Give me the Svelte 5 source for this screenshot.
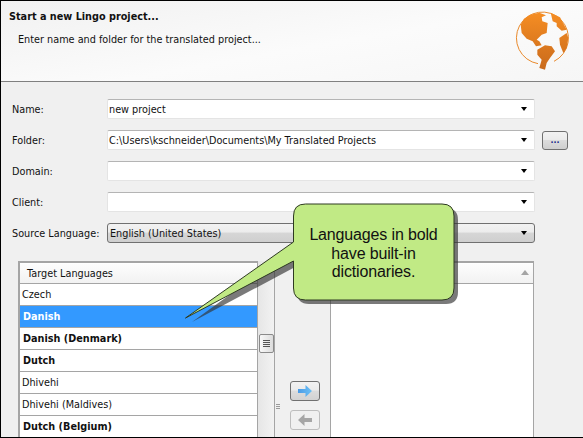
<script>
  const fields = [
    { label: 'Name:', value: 'new project' },
    { label: 'Folder:', value: 'C:\\Users\\kschneider\\Documents\\My Translated Projects', browse: true },
    { label: 'Domain:', value: '' },
    { label: 'Client:', value: '' },
    { label: 'Source Language:', value: 'English (United States)', grey: true }
  ];
  const langs = [
    { name: 'Czech' },
    { name: 'Danish', bold: true, selected: true },
    { name: 'Danish (Denmark)', bold: true },
    { name: 'Dutch', bold: true },
    { name: 'Dhivehi' },
    { name: 'Dhivehi (Maldives)' },
    { name: 'Dutch (Belgium)', bold: true }
  ];
</script>

<div class="win">
  <header class="head">
    <div class="title">Start a new Lingo project...</div>
    <div class="sub">Enter name and folder for the translated project...</div>
    <svg class="globe" viewBox="0 0 195 210" width="65" height="70">
      <defs>
        <linearGradient id="g" gradientUnits="userSpaceOnUse" x1="0" y1="15" x2="0" y2="185">
          <stop offset="0" stop-color="#f58d23" />
          <stop offset="1" stop-color="#c96a1c" />
        </linearGradient>
      </defs>
      <path d="M84 167 A78 78 0 1 1 132 160" fill="none" stroke="#e98a2c" stroke-width="3" />
      <path fill="url(#g)" d="M88 14 L60 20 L42 32 L32 50 L35 75 L50 92 L68 100 L78 115 L95 112 L88 100 L80 95 L95 80 L110 75 L113 45 L97 40 L95 28 L108 22 Z" />
      <path fill="url(#g)" d="M82 125 L105 112 L125 115 L135 130 L120 150 L110 165 L105 185 L88 180 L95 155 L82 140 Z" />
      <path fill="url(#g)" d="M122 14 L150 28 L170 65 L155 68 L140 55 L140 45 L128 40 Z" />
      <path fill="url(#g)" d="M148 90 L170 75 L175 90 L170 120 L160 135 L150 110 Z" />
    </svg>
  </header>

  <main class="body">
    <div class="form">
      {#each fields as f}
        <div class="row">
          <span class="lbl">{f.label}</span>
          <div class="combo" class:grey={f.grey}>
            <span class="val">{f.value}</span>
            <span class="caret"></span>
          </div>
          {#if f.browse}<button class="browse">...</button>{/if}
        </div>
      {/each}
    </div>

    <div class="panes">
      <div class="table left">
        <div class="th">Target Languages</div>
        <div class="list">
          {#each langs as l}
            <div class="item" class:bold={l.bold} class:sel={l.selected}>{l.name}</div>
          {/each}
        </div>
      </div>
      <div class="scroll">
        <div class="thumb"><i></i><i></i><i></i><i></i></div>
      </div>
      <div class="mid">
        <div class="grip"><i></i><i></i><i></i></div>
        <button class="arrow on">
          <svg viewBox="0 0 14 12" width="14" height="12">
            <defs>
              <linearGradient id="b" x1="0" y1="0" x2="1" y2="0">
                <stop offset="0" stop-color="#4a9be6" />
                <stop offset="1" stop-color="#6cc0f5" />
              </linearGradient>
            </defs>
            <path d="M0 4 H7.500 V0 L14 6 L7.500 12 V8 H0 Z" fill="url(#b)" />
          </svg>
        </button>
        <button class="arrow off">
          <svg viewBox="0 0 14 12" width="14" height="12"><path d="M14 4 H6.500 V0 L0 6 L6.500 12 V8 H14 Z" fill="#a6a6a6" /></svg>
        </button>
      </div>
      <div class="table right">
        <div class="th end"><span class="sort"></span></div>
        <div class="blank"></div>
      </div>
    </div>
  </main>

  <div class="callout">
    <svg class="shape" viewBox="0 0 300 130" width="300" height="130">
      <path class="shadow" d="M112 46 L7 122 L112 66 V92 Q112 104 124 104 H261 Q273 104 273 92 V20 Q273 8 261 8 H124 Q112 8 112 20 Z" />
      <path class="bubble" d="M108.500 42 L0.500 118 L108.500 61 V88 Q108.500 100 120.500 100 H257 Q269 100 269 88 V16 Q269 4 257 4 H120.500 Q108.500 4 108.500 16 Z" />
    </svg>
    <p class="note">Languages in bold<br />have built-in<br />dictionaries.</p>
  </div>
</div>

<style>
  :global(body) { margin: 0; background: #f0f0f0; }
  * { box-sizing: border-box; }
  .win {
    position: relative;
    width: 583px;
    height: 438px;
    overflow: hidden;
    border: 1px solid #000;
    border-right: 0;
    background: #f0f0f0;
    font: 9.7px "DejaVu Sans", sans-serif;
    color: #111;
    display: flex;
    flex-direction: column;
  }
  .head {
    position: relative;
    height: 81px;
    flex: none;
    padding: 9px 8px 0;
    background: linear-gradient(170deg, #f1f1f1 0%, #fbfbfb 55%, #f6f6f6 100%);
    border-bottom: 1px solid #808080;
  }
  .title { font-weight: 700; line-height: 14px; }
  .sub { margin: 9px 0 0 9px; line-height: 14px; }
  .globe { position: absolute; left: 509px; top: 7px; }
  .body { flex: 1; min-height: 0; display: flex; flex-direction: column; padding: 17px 0 0 11px; }
  .form { display: flex; flex-direction: column; gap: 11px; width: 556px; }
  .row { display: flex; align-items: center; height: 20px; }
  .lbl { width: 95px; flex: none; }
  .combo {
    width: 428px;
    height: 20px;
    flex: none;
    display: flex;
    align-items: center;
    justify-content: space-between;
    padding: 0 7px 0 1px;
    background: #fff;
    border: 1px solid #e4e4e4;
    border-top-color: #b4b4b4;
    border-radius: 2px;
  }
  .combo.grey {
    background: linear-gradient(#f2f2f2 0%, #ececec 45%, #d6d6d6 50%, #cfcfcf 100%);
    border: 1px solid #707070;
    border-radius: 3px;
    padding-left: 2px;
  }
  .caret { width: 0; height: 0; border: 3.5px solid transparent; border-top: 4px solid #000; border-bottom: 0; }
  .browse {
    width: 26px;
    height: 19px;
    margin-left: 7px;
    padding: 2px 0 0;
    border: 1px solid #707070;
    border-radius: 3px;
    background: linear-gradient(#f2f2f2 0%, #ebebeb 45%, #dcdcdc 50%, #cfcfcf 100%);
    font: 700 8px "DejaVu Sans", sans-serif;
    color: #1a2a8a;
    line-height: 10px;
  }
  .panes { display: flex; margin: 18px 0 0 6px; height: 177px; align-items: stretch; }
  .table { display: flex; flex-direction: column; flex: none; border: 2px solid #a5a5a5; border-bottom: 0; background: #fff; }
  .table.left { width: 240px; border-right: 1px solid #a5a5a5; }
  .table.right { width: 204px; border-left: 1px solid #a5a5a5; border-right: 1px solid #a5a5a5; }
  .th {
    height: 21px;
    flex: none;
    padding-left: 7px;
    line-height: 19px;
    background: linear-gradient(#fdfdfd, #f2f2f2);
    border-bottom: 1px solid #a5a5a5;
    border-top: 1px solid #fff;
    position: relative;
  }
  .sort { position: absolute; right: 4px; top: 6px; width: 0; height: 0; border: 4.5px solid transparent; border-bottom: 5px solid #a5a5a5; border-top: 0; }
  .list { flex: 1; overflow: hidden; display: flex; flex-direction: column; }
  .item { height: 22px; flex: none; padding-left: 2px; line-height: 21px; border-bottom: 1px solid #a5a5a5; background: #fff; }
  .item.bold { font-weight: 700; padding-left: 3px; }
  .item.sel { background: #3399ff; color: #fff; }
  .scroll { width: 17px; flex: none; background: linear-gradient(90deg, #e6e6e6, #f2f2f2); border-right: 1px solid #a5a5a5; padding: 73px 0 0 1px; }
  .thumb {
    width: 15px; height: 19px;
    border: 1px solid #8a8a8a; border-radius: 2px;
    background: linear-gradient(90deg, #f8f8f8, #dcdcdc);
    display: flex; flex-direction: column; gap: 1px; align-items: center; justify-content: center;
  }
  .thumb i { display: block; width: 7px; height: 1px; background: #555; }
  .mid { width: 55px; flex: none; position: relative; display: flex; flex-direction: column; align-items: center; padding: 120px 0 0 5px; gap: 9px; }
  .grip { position: absolute; left: 1px; top: 143px; display: flex; flex-direction: column; gap: 1px; }
  .grip i { display: block; width: 4px; height: 1px; background: #9a9a9a; }
  .arrow {
    width: 30px; height: 20px; flex: none; padding: 0;
    display: flex; align-items: center; justify-content: center;
    border-radius: 3px;
    background: linear-gradient(#f2f2f2 0%, #ebebeb 45%, #dcdcdc 50%, #d2d2d2 100%);
  }
  .arrow.on { border: 1px solid #707070; }
  .arrow.off { border: 1px solid #bdbdbd; background: #f0f0f0; }
  .blank { flex: 1; background: #fff; }
  .callout { position: absolute; left: 184px; top: 199px; width: 300px; height: 130px; }
  .shape { position: absolute; left: 0; top: 0; }
  .shadow { fill: #333; fill-opacity: 0.65; }
  .bubble { fill: #c1ea85; stroke: #2e3a22; stroke-width: 1; }
  .note {
    position: absolute; left: 108px; top: 26px; width: 161px; margin: 0;
    text-align: center;
    font: 16px/18.5px "Liberation Sans", sans-serif;
    letter-spacing: -0.15px;
    color: #111;
  }
</style>
